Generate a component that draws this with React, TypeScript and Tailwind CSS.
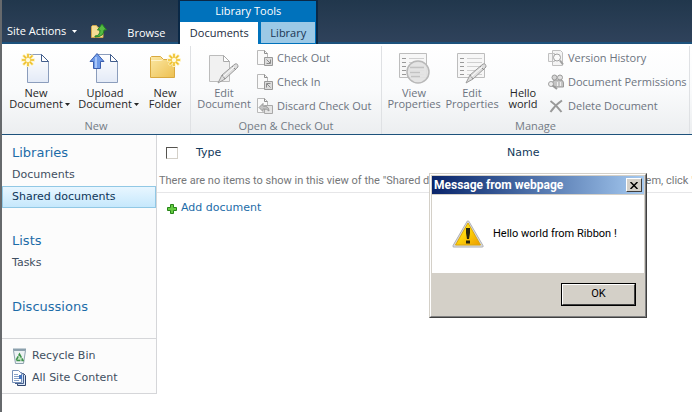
import { useState } from 'react';
import type { ReactNode } from 'react';

const ribbonFont = "font-['Open_Sans','Noto_Sans',sans-serif]";
const bodyFont = "font-['DejaVu_Sans',sans-serif]";
const dialogFont = "font-['Roboto','Liberation_Sans',sans-serif]";

function Spark({ x, y }: { x: number; y: number }) {
  return (
    <g transform={`translate(${x} ${y})`}>
      <path d="M0-7V7M-7 0H7M-5-5L5 5M5-5L-5 5" stroke="#fdf0b8" strokeWidth="3" />
      <path d="M0-6V6M-6 0H6M-4.500-4.500L4.500 4.500M4.500-4.500L-4.500 4.500" stroke="#eebf28" strokeWidth="1.6" />
      <circle r="2.2" fill="#fffbe0" />
    </g>
  );
}

function Page() {
  return (
    <>
      <path d="M7.500 2.500h14l7 7v21h-21z" fill="url(#sheet)" stroke="#8b9dbc" />
      <path d="M21.500 2.500v7h7z" fill="#fff" stroke="#425d8c" />
    </>
  );
}

function Pencil() {
  return (
    <>
      <path d="M10 31l4-8L27 12q3-1 3 3L17 27z" fill="#dedede" stroke="#9b9b9b" />
      <path d="M14 23l3 4M24 14l4 4" stroke="#8c8c8c" />
      <path d="M15.500 24.500L26 15" stroke="#fff" />
    </>
  );
}

function NewDocumentIcon() {
  return (
    <svg className="size-8" viewBox="0 0 32 32" fill="none">
      <defs>
        <linearGradient id="sheet" x1="0" y1="0" x2="0" y2="1">
          <stop offset="0" stopColor="#fff" />
          <stop offset="1" stopColor="#e3eaf7" />
        </linearGradient>
      </defs>
      <Page />
      <Spark x={8} y={8} />
    </svg>
  );
}

function UploadIcon() {
  return (
    <svg className="size-8" viewBox="0 0 32 32" fill="none">
      <Page />
      <path d="M8 1.500L15 9.500h-3.500v7h-7v-7H1z" fill="#6f9be8" stroke="#3c5fae" />
      <path d="M7 5v11" stroke="#a8c6f8" strokeWidth="2" />
    </svg>
  );
}

function NewFolderIcon() {
  return (
    <svg className="size-8" viewBox="0 0 32 32" fill="none">
      <defs>
        <linearGradient id="folder" x1="0" y1="0" x2="1" y2="1">
          <stop offset="0" stopColor="#fbe8a4" />
          <stop offset="1" stopColor="#edc051" />
        </linearGradient>
      </defs>
      <path d="M1.500 25.500v-20l1-1h9l3 3h11v18z" fill="url(#folder)" stroke="#d9a940" />
      <path d="M2 8.500h10l2-1" stroke="#fff3c8" />
      <Spark x={25} y={8} />
    </svg>
  );
}

function EditDocumentIcon() {
  return (
    <svg className="size-8" viewBox="0 0 32 32" fill="none">
      <path d="M1.500 3.500h14l6 6v20h-20z" fill="#f1f1f1" stroke="#bcbcbc" />
      <path d="M15.500 3.500v6h6z" fill="#fff" stroke="#aaa" />
      <Pencil />
    </svg>
  );
}

function FormLines() {
  return (
    <>
      <path d="M1.500 1.500h27v24h-27z" fill="#f7f7f7" stroke="#bdbdbd" />
      <path d="M4 6.500h4M4 10.500h4M4 14.500h4M4 18.500h4M4 22.500h4" stroke="#999" />
      <path d="M11 6.500h15M11 10.500h15M11 14.500h15M11 18.500h15M11 22.500h15" stroke="#d0d0d0" />
    </>
  );
}

function ViewPropertiesIcon() {
  return (
    <svg className="size-8" viewBox="0 0 32 32" fill="none">
      <FormLines />
      <circle cx="20" cy="20" r="11" fill="#e2e2e2" fillOpacity=".93" stroke="#b8b8b8" strokeWidth="1.5" />
      <path d="M12 15.500h14M12 20.500h10M13 24.500h9" stroke="#c2c2c2" strokeWidth="1.4" />
    </svg>
  );
}

function EditPropertiesIcon() {
  return (
    <svg className="size-8" viewBox="0 0 32 32" fill="none">
      <FormLines />
      <Pencil />
    </svg>
  );
}

function SmallSheet({ children }: { children: ReactNode }) {
  return (
    <svg className="size-4 shrink-0" viewBox="0 0 16 16" fill="none">
      <path d="M.5.5h7l3 3v11H.5z" fill="#fafafa" stroke="#b9b9b9" />
      <path d="M7.500.5v3h3" stroke="#8f8f8f" />
      {children}
    </svg>
  );
}

function CheckOutIcon() {
  return (
    <SmallSheet>
      <path d="M7.500 7.500h8v8h-8z" fill="#dcdcdc" stroke="#999" />
      <path d="M9.500 9.500l3.500 3.500M13.500 9.500v4h-4" stroke="#8a8a8a" />
    </SmallSheet>
  );
}

function CheckInIcon() {
  return (
    <SmallSheet>
      <path d="M7.500 7.500h8v8h-8z" fill="#dcdcdc" stroke="#999" />
      <path d="M13.500 13.500L10 10M9.500 13.500v-4h4" stroke="#8a8a8a" />
    </SmallSheet>
  );
}

function DiscardIcon() {
  return (
    <SmallSheet>
      <path d="M7.500 7.500h8v8h-8z" fill="#e4e4e4" stroke="#a8a8a8" />
      <path d="M2 9.500l4-4v2.500q6 0 6 5-2-2.500-6-2v2.500z" fill="#c4c4c4" stroke="#999" />
    </SmallSheet>
  );
}

function HistoryIcon() {
  return (
    <svg className="size-4 shrink-0" viewBox="0 0 16 16" fill="none">
      <path d="M.5 3.500h6v8h-6zM4.500.5h8l2 2v13h-10z" fill="#f4f4f4" stroke="#c0c0c0" />
      <circle cx="9" cy="7.500" r="3.500" fill="#fafafa" stroke="#a0a0a0" />
      <path d="M12 10.500l3 4" stroke="#a0a0a0" strokeWidth="2" />
    </svg>
  );
}

function PermissionsIcon() {
  return (
    <svg className="size-4 shrink-0" viewBox="0 0 16 16" fill="none">
      <path d="M4.500 12V9q0-3 3-3h5q3 0 3 3v4h-7z" fill="#c4c4c4" stroke="#999" />
      <circle cx="6.500" cy="3.500" r="2.500" fill="#d4d4d4" stroke="#999" />
      <circle cx="12" cy="3.500" r="2.500" fill="#e1e1e1" stroke="#999" />
      <path d="M9.500 8v4M12.500 8v4" stroke="#eee" />
      <circle cx="3" cy="10" r="2.500" fill="#eee" stroke="#a0a0a0" />
      <path d="M4.500 11.500L9 15" stroke="#999" strokeWidth="2" />
    </svg>
  );
}

function DeleteIcon() {
  return (
    <svg className="size-4 shrink-0" viewBox="0 0 16 16" fill="none">
      <path d="M2.500 3q6 4 11 11M14 2.500Q7 7 2.500 14" stroke="#999" strokeWidth="2" />
    </svg>
  );
}

function NavigateUpIcon() {
  return (
    <svg className="size-4" viewBox="0 0 16 16" fill="none">
      <path d="M.5 14.500v-11l1-1h4l1.500 2h5v10z" fill="#f5dd95" stroke="#cfa64c" />
      <path d="M4 13q5 0 5-6H6.500L11 1l4.500 6H13q0 7-9 7z" fill="#55bb42" stroke="#238123" />
    </svg>
  );
}

function RecycleIcon() {
  return (
    <svg className="size-4" viewBox="0 0 16 16" fill="none">
      <path d="M1.500 2.500l2 13h8l2-13z" fill="#edf2f4" stroke="#8fa3b0" />
      <path d="M1 1.500h13" stroke="#8ba0ad" strokeWidth="2" />
      <path d="M7.500 6l3.500 6.500H4z" fill="#c5e5c4" stroke="#3d914a" strokeWidth="1.500" strokeDasharray="4 1" />
    </svg>
  );
}

function SiteContentIcon() {
  return (
    <svg className="size-4" viewBox="0 0 16 16" fill="none">
      <path d="M6.500 3.500h5l2 2v10h-8z" fill="#dce7f7" stroke="#2e446d" />
      <path d="M4 2.500h5l2.500 2v9H3" fill="#d3e1f5" stroke="#45608f" />
      <path d="M.5.5h6l3 3v9h-9z" fill="#fff" stroke="#7791b9" />
      <path d="M2 4.500h4M2 6.500h5M2 8.500h5M2 10.500h5" stroke="#88a2c8" />
      <path d="M7 5h3v4H7z" fill="#4474c0" />
    </svg>
  );
}

function WarningIcon() {
  return (
    <svg className="size-8 shrink-0" viewBox="0 0 32 32" fill="none">
      <defs>
        <linearGradient id="warn" x1="0" y1="0" x2="1" y2="1">
          <stop offset="0" stopColor="#fff22d" />
          <stop offset=".5" stopColor="#fccf08" />
          <stop offset="1" stopColor="#ed9c00" />
        </linearGradient>
      </defs>
      <path d="M16 4L30 28H2z" fill="#ccc" stroke="#a9abb0" strokeWidth="3" strokeLinejoin="round" />
      <path d="M16 4L30 28H2z" fill="#ddd" stroke="#d4d5d8" strokeWidth="1.500" strokeLinejoin="round" />
      <path d="M16 5L28.500 27h-25z" fill="url(#warn)" stroke="#dba70c" />
      <path d="M14 10h4v5l-1 6h-2l-1-6z" fill="#27250d" />
      <path d="M14 22.500h4v3h-4z" fill="#27250d" />
    </svg>
  );
}

function Caret({ className }: { className: string }) {
  return (
    <svg className={className} viewBox="0 0 5 3">
      <path d="M0 0h5L2.500 3z" fill="currentColor" />
    </svg>
  );
}

interface LargeButtonProps {
  icon?: ReactNode;
  lines: [string, string];
  caret?: boolean;
  disabled?: boolean;
  className: string;
}

function LargeButton({ icon, lines, caret, disabled, className }: LargeButtonProps) {
  return (
    <button
      type="button"
      disabled={disabled}
      className={`flex shrink-0 items-end pt-[6px] text-[11px] leading-[11px] text-[#262626] disabled:text-[#6d7480] ${className}`}
    >
      <span className="flex flex-1 flex-col items-center">
        <span className="mb-[3px] flex h-8 items-center">{icon}</span>
        <span>{lines[0]}</span>
        <span>{lines[1]}</span>
      </span>
      {caret && <Caret className="mb-[3px] h-[3px] w-[5px]" />}
    </button>
  );
}

function SmallButton({ icon, label }: { icon: ReactNode; label: string }) {
  return (
    <button type="button" disabled className="flex h-6 items-center gap-1 text-[11px] whitespace-nowrap text-[#6d7480]">
      {icon}
      {label}
    </button>
  );
}

function RibbonGroup({ title, className, children }: { title: string; className: string; children: ReactNode }) {
  return (
    <section className={`flex shrink-0 flex-col border-r border-[#dfe1e4] ${className}`}>
      <div className="flex h-[72px] items-start">{children}</div>
      <h2 className="text-center text-[11px] leading-4 text-[#737b85]">{title}</h2>
    </section>
  );
}

function NavHeading({ children }: { children: ReactNode }) {
  return (
    <a href="#" className="block px-[10px] text-[13px] leading-[22px] text-[#1c6ca8]">
      {children}
    </a>
  );
}

function AlertDialog({ onClose }: { onClose: () => void }) {
  return (
    <div
      role="alertdialog"
      aria-label="Message from webpage"
      className={`absolute top-[173px] left-[427px] w-[218px] border border-t-[#d4d0c8] border-r-[#404040] border-b-[#404040] border-l-[#d4d0c8] bg-[#d4d0c8] text-[11px] ${dialogFont}`}
    >
      <div className="border border-t-white border-r-[#808080] border-b-[#808080] border-l-white p-px">
        <div className="flex h-[18px] items-center justify-between bg-linear-to-r from-[#0a246a] to-[#a6caf0] px-[2px] text-white">
          <span className="text-[12px] font-bold">Message from webpage</span>
          <button
            type="button"
            aria-label="Close"
            onClick={onClose}
            className="flex h-[14px] w-4 items-center justify-center border border-t-white border-r-[#404040] border-b-[#404040] border-l-white bg-[#d4d0c8]"
          >
            <svg className="h-[7px] w-2" viewBox="0 0 8 7">
              <path d="M.5 0l7 7M7.500 0l-7 7" stroke="#000" strokeWidth="1.500" />
            </svg>
          </button>
        </div>
        <div className="mt-px flex h-[78px] items-center gap-[9px] bg-white pl-5 text-black">
          <WarningIcon />
          <p className="whitespace-nowrap">Hello world from Ribbon !</p>
        </div>
        <div className="flex justify-end px-2 pt-[10px] pb-[9px]">
          <button type="button" onClick={onClose} className="h-[23px] w-[75px] border border-black bg-[#d4d0c8] text-black">
            <span className="flex h-full items-center justify-center border border-t-white border-r-[#404040] border-b-[#404040] border-l-white">
              OK
            </span>
          </button>
        </div>
      </div>
    </div>
  );
}

export default function App() {
  const [alertOpen, setAlertOpen] = useState(true);

  return (
    <div className={`relative min-h-screen overflow-hidden border-l-2 border-[#66696c] bg-white ${bodyFont}`}>
      <header className={ribbonFont}>
        <div className="flex h-11 items-end border-b-2 border-[#1d527c] bg-linear-to-b from-[#21374c] to-[#2f425b] text-[11px] text-white">
          <button type="button" className="ml-[5px] flex h-[22px] items-center gap-[6px]">
            Site Actions
            <Caret className="h-[3px] w-[5px]" />
          </button>
          <a href="#" aria-label="Navigate up" className="mb-[3px] ml-[14px]">
            <NavigateUpIcon />
          </a>
          <a href="#" className="ml-5 w-[51px] leading-[18px]">
            Browse
          </a>
          <div className="-mb-[2px] flex h-11 flex-col border-x-2 border-t border-[#0a2846] bg-[#0072bc]">
            <div className="h-[21px] text-center leading-5">Library Tools</div>
            <nav className="flex h-[22px] leading-[22px]">
              <a href="#" className="w-[78px] bg-white text-center text-[#1b2b40]">
                Documents
              </a>
              <a href="#" className="mr-px mb-px ml-[3px] w-[54px] bg-[#9cc9e6] text-center text-[#1b3554]">
                Library
              </a>
            </nav>
          </div>
        </div>

        <div className="flex h-[91px] border-b border-[#1d527c] bg-linear-to-b from-white via-[#fafbfc] to-[#eceef0] pt-[2px]">
          <RibbonGroup title="New" className="w-[189px]">
            <LargeButton icon={<NewDocumentIcon />} lines={['New', 'Document']} caret className="ml-[5px] w-[63px]" />
            <LargeButton icon={<UploadIcon />} lines={['Upload', 'Document']} caret className="ml-[6px] w-[63px]" />
            <LargeButton icon={<NewFolderIcon />} lines={['New', 'Folder']} className="ml-2 w-9" />
          </RibbonGroup>
          <RibbonGroup title="Open & Check Out" className="w-[191px]">
            <LargeButton icon={<EditDocumentIcon />} lines={['Edit', 'Document']} disabled className="ml-[5px] w-[56px]" />
            <div className="ml-[5px] flex flex-col">
              <SmallButton icon={<CheckOutIcon />} label="Check Out" />
              <SmallButton icon={<CheckInIcon />} label="Check In" />
              <SmallButton icon={<DiscardIcon />} label="Discard Check Out" />
            </div>
          </RibbonGroup>
          <RibbonGroup title="Manage" className="w-[308px]">
            <LargeButton icon={<ViewPropertiesIcon />} lines={['View', 'Properties']} disabled className="ml-[5px] w-[54px]" />
            <LargeButton icon={<EditPropertiesIcon />} lines={['Edit', 'Properties']} disabled className="ml-1 w-[54px]" />
            <LargeButton lines={['Hello', 'world']} className="ml-1 w-[40px]" />
            <div className="ml-[5px] flex flex-col">
              <SmallButton icon={<HistoryIcon />} label="Version History" />
              <SmallButton icon={<PermissionsIcon />} label="Document Permissions" />
              <SmallButton icon={<DeleteIcon />} label="Delete Document" />
            </div>
          </RibbonGroup>
        </div>
      </header>

      <div className="flex items-start">
        <aside className="w-[155px] shrink-0 border-r border-b border-[#d5d6d9] bg-[#fcfcfc] text-[11px] text-[#3f4f61]">
          <nav className="pt-[7px] pb-5">
            <NavHeading>Libraries</NavHeading>
            <a href="#" className="block px-[10px] leading-[22px]">
              Documents
            </a>
            <a
              href="#"
              className="block border border-[#91c8e5] bg-linear-to-b from-[#e8f6ff] to-[#c6e8fc] px-[9px] leading-5 text-[#0e3558]"
            >
              Shared documents
            </a>
            <div className="pt-[22px]">
              <NavHeading>Lists</NavHeading>
              <a href="#" className="block px-[10px] leading-[22px]">
                Tasks
              </a>
            </div>
            <div className="pt-[22px]">
              <NavHeading>Discussions</NavHeading>
            </div>
          </nav>
          <div className="border-t border-[#d5d6d9] px-[10px] pt-[6px] pb-1">
            <a href="#" className="flex h-[22px] items-center gap-1">
              <RecycleIcon />
              Recycle Bin
            </a>
            <a href="#" className="flex h-[22px] items-center gap-1">
              <SiteContentIcon />
              All Site Content
            </a>
          </div>
        </aside>

        <main className="min-w-0 flex-1 overflow-hidden text-[11px]">
          <table className="w-full table-fixed text-left">
            <thead>
              <tr className="h-9 text-[#12395b]">
                <th className="w-[39px] pl-[9px]">
                  <input
                    type="checkbox"
                    aria-label="Select all"
                    className="block size-3 appearance-none border border-t-[#55534f] border-r-[#d4d0c8] border-b-[#d4d0c8] border-l-[#55534f] bg-white"
                  />
                </th>
                <th className="w-[311px] font-normal">Type</th>
                <th className="font-normal">Name</th>
              </tr>
            </thead>
            <tbody>
              <tr className="h-[21px] border-b border-[#e6e6e8]">
                <td colSpan={3} className={`pl-[2px] whitespace-nowrap text-[#757779] ${dialogFont}`}>
                  There are no items to show in this view of the "Shared documents" document library. To add a new item, click "New" or
                  "Upload".
                </td>
              </tr>
            </tbody>
          </table>
          <a href="#" className="mt-2 ml-[10px] flex h-4 w-fit items-center gap-1 text-[#1c6ca8]">
            <svg className="size-[10px]" viewBox="0 0 10 10">
              <path d="M3.500.5h3v3h3v3h-3v3h-3v-3h-3v-3h3z" fill="#65cb42" stroke="#278419" />
            </svg>
            Add document
          </a>
        </main>
      </div>

      {alertOpen && <AlertDialog onClose={() => setAlertOpen(false)} />}
    </div>
  );
}
